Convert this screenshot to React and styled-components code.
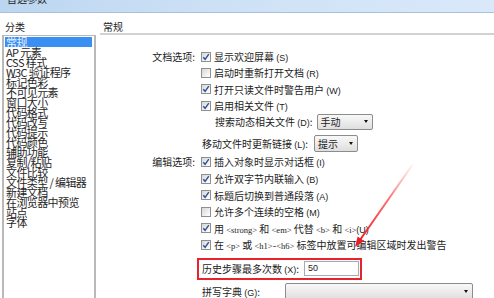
import React from "react";
import styled, { createGlobalStyle } from "styled-components";

const GlobalStyle = createGlobalStyle`
  html, body {
    margin: 0;
    padding: 0;
    background: #fff;
    overflow: hidden;
  }
  * {
    box-sizing: border-box;
  }
`;

const CJK = `"Noto Sans CJK SC", "Noto Sans", sans-serif`;

const categories = [
  "常规",
  "AP 元素",
  "CSS 样式",
  "W3C 验证程序",
  "标记色彩",
  "不可见元素",
  "窗口大小",
  "代码格式",
  "代码改写",
  "代码提示",
  "代码颜色",
  "辅助功能",
  "复制/粘贴",
  "文件比较",
  "文件类型 / 编辑器",
  "新建文档",
  "在浏览器中预览",
  "站点",
  "字体",
];

export default function App() {
  return (
    <Window>
      <GlobalStyle />
      <TitleBar>
        <TitleText>首选参数</TitleText>
      </TitleBar>
      <Body>
        <Sidebar>
          <SectionLabel>分类</SectionLabel>
          <CategoryList>
            {categories.map((c, i) => (
              <CategoryItem key={c} $selected={i === 0}>
                {c}
              </CategoryItem>
            ))}
          </CategoryList>
        </Sidebar>
        <Main>
          <PanelTitle>常规</PanelTitle>
          <Form>
            <Group>
              <GroupLabel>文档选项:</GroupLabel>
              <GroupBody>
                <CheckRow checked label="显示欢迎屏幕" k="S" />
                <CheckRow label="启动时重新打开文档" k="R" />
                <CheckRow checked label="打开只读文件时警告用户" k="W" />
                <CheckRow checked label="启用相关文件" k="T" />
                <FieldRow $indent={13} $h={16}>
                  <span>
                    搜索动态相关文件 <Key>(D)</Key>:
                  </span>
                  <Select $w={56}>
                    <span>手动</span>
                    <Caret />
                  </Select>
                </FieldRow>
              </GroupBody>
            </Group>
            <Group $top={5}>
              <GroupLabel />
              <GroupBody>
                <FieldRow $h={17}>
                  <span>
                    移动文件时更新链接 <Key>(L)</Key>:
                  </span>
                  <Select $w={44} $h={17} $left={2}>
                    <span>提示</span>
                    <Caret />
                  </Select>
                </FieldRow>
              </GroupBody>
            </Group>
            <Group $top={2}>
              <GroupLabel $h={16.6}>编辑选项:</GroupLabel>
              <GroupBody>
                <CheckRow checked h={16.6} label="插入对象时显示对话框" k="I" />
                <CheckRow checked h={16.6} label="允许双字节内联输入" k="B" />
                <CheckRow checked h={16.6} label="标题后切换到普通段落" k="A" />
                <CheckRow h={16.6} label="允许多个连续的空格" k="M" />
                <CheckRow checked h={16.6}>
                  用 <Tag>&lt;strong&gt;</Tag> 和 <Tag>&lt;em&gt;</Tag> 代替{" "}
                  <Tag>&lt;b&gt;</Tag> 和 <Tag>&lt;i&gt;</Tag>
                  <Key>(U)</Key>
                </CheckRow>
                <CheckRow checked h={16.6}>
                  在 <Tag>&lt;p&gt;</Tag> 或 <Tag>&lt;h1&gt;</Tag>-
                  <Tag>&lt;h6&gt;</Tag> 标签中放置可编辑区域时发出警告
                </CheckRow>
              </GroupBody>
            </Group>
            <Group $top={4.7}>
              <GroupLabel />
              <GroupBody>
                <Highlight>
                  <span>
                    历史步骤最多次数 <Key>(X)</Key>:
                  </span>
                  <TextInput>50</TextInput>
                </Highlight>
              </GroupBody>
            </Group>
            <Group $top={3}>
              <GroupLabel />
              <GroupBody>
                <FieldRow $h={17}>
                  <span>
                    拼写字典 <Key>(G)</Key>:
                  </span>
                  <Select $w={188} $h={17} $left={21}>
                    <span />
                    <Caret />
                  </Select>
                </FieldRow>
              </GroupBody>
            </Group>
          </Form>
        </Main>
      </Body>
      <ArrowLayer width="494" height="298" viewBox="0 0 494 298">
        <defs>
          <linearGradient
            id="fade"
            gradientUnits="userSpaceOnUse"
            x1="413"
            y1="164"
            x2="358"
            y2="242"
          >
            <stop offset="0" stopColor="#ff4a4a" stopOpacity="0.05" />
            <stop offset="0.45" stopColor="#ff3030" stopOpacity="0.7" />
            <stop offset="1" stopColor="#ec1c24" />
          </linearGradient>
        </defs>
        <line
          x1="413"
          y1="164"
          x2="360"
          y2="240"
          stroke="url(#fade)"
          strokeWidth="2"
        />
        <polygon points="355,247 357.6,236.4 364,240.9" fill="#ec1c24" />
      </ArrowLayer>
    </Window>
  );
}

function CheckRow({ checked, label, k, h, children }) {
  return (
    <Row $h={h}>
      <Box>
        {checked && (
          <svg width="8" height="8" viewBox="0 0 8 8">
            <path
              d="M1.3 4.2 L3.1 6.3 L6.8 1.2"
              fill="none"
              stroke="#2c4f96"
              strokeWidth="1.4"
            />
          </svg>
        )}
      </Box>
      <RowText>
        {children || (
          <>
            {label} <Key>({k})</Key>
          </>
        )}
      </RowText>
    </Row>
  );
}

const Window = styled.div`
  position: relative;
  width: 494px;
  height: 298px;
  overflow: hidden;
  background: #fff;
  font-family: ${CJK};
  color: #1c1c1c;
`;

const TitleBar = styled.div`
  height: 13px;
  overflow: hidden;
  background: linear-gradient(to right, #bcd6f1, #cde1f6 45%, #d9e9fa);
  border-bottom: 1px solid #a9c0d8;
  padding-left: 7px;
`;

const TitleText = styled.div`
  font-size: 10px;
  line-height: 10px;
  margin-top: -6px;
  color: #222;
`;

const Body = styled.div`
  display: grid;
  grid-template-columns: 100px 1fr;
`;

const Sidebar = styled.div`
  padding-left: 2px;
  display: flex;
  flex-direction: column;
`;

const SectionLabel = styled.div`
  font-size: 10px;
  line-height: 10px;
  padding: 9px 0 0 3px;
  height: 22px;
`;

const CategoryList = styled.div`
  width: 94px;
  height: 280px;
  border: 1px solid #b9b9b9;
  border-left-width: 2px;
  border-right-width: 2px;
  padding: 1px 1px;
`;

const CategoryItem = styled.div`
  font-size: 11px;
  line-height: 10px;
  height: 10px;
  letter-spacing: -0.6px;
  white-space: nowrap;
  padding-left: 1px;
  background: ${(p) => (p.$selected ? "#3a8ff3" : "transparent")};
  color: ${(p) => (p.$selected ? "#eaf3ff" : "#262626")};
  margin-right: ${(p) => (p.$selected ? "1px" : "0")};
`;

const Main = styled.div`
  display: flex;
  flex-direction: column;
`;

const PanelTitle = styled.div`
  font-size: 10px;
  line-height: 10px;
  padding: 9px 0 0 3px;
  height: 22px;
  border-bottom: 2px solid #d2d2d2;
`;

const Form = styled.div`
  padding-top: 13.5px;
  display: flex;
  flex-direction: column;
`;

const Group = styled.div`
  display: grid;
  grid-template-columns: 96px 1fr;
  column-gap: 5px;
  margin-top: ${(p) => p.$top || 0}px;
`;

const GroupLabel = styled.div`
  font-size: 10px;
  text-align: right;
  height: ${(p) => p.$h || 16.3}px;
  line-height: ${(p) => p.$h || 16.3}px;
  padding-right: 1px;
`;

const GroupBody = styled.div`
  display: flex;
  flex-direction: column;
`;

const Row = styled.div`
  display: flex;
  align-items: center;
  height: ${(p) => p.$h || 16.3}px;
  gap: 3px;
`;

const Box = styled.span`
  flex: none;
  width: 10px;
  height: 10px;
  border: 1px solid #8e8f8f;
  background: linear-gradient(135deg, #d6d6d6, #f4f4f4 70%, #fff);
  display: flex;
  align-items: center;
  justify-content: center;
`;

const RowText = styled.span`
  font-size: 10px;
  white-space: nowrap;
`;

const Key = styled.span`
  font-family: "Liberation Sans", Arial, sans-serif;
  font-size: 9px;
`;

const Tag = styled.span`
  font-family: "Liberation Serif", "Times New Roman", serif;
  font-size: 8.5px;
`;

const FieldRow = styled.div`
  display: flex;
  align-items: center;
  height: ${(p) => p.$h}px;
  padding-left: ${(p) => (p.$indent || 0) + 1}px;
  gap: 4px;
  font-size: 10px;
  white-space: nowrap;
`;

const Select = styled.div`
  width: ${(p) => p.$w}px;
  height: ${(p) => p.$h || 16}px;
  margin-left: ${(p) => p.$left || 0}px;
  border: 1px solid #8c8c8c;
  border-radius: 2px;
  background: linear-gradient(#f8f8f8, #ececec 50%, #dedede);
  display: flex;
  align-items: center;
  justify-content: space-between;
  padding: 0 3px 0 3px;
  font-size: 10px;
`;

const Caret = styled.span`
  width: 0;
  height: 0;
  border-left: 2.5px solid transparent;
  border-right: 2.5px solid transparent;
  border-top: 3px solid #111;
  margin-right: 1px;
`;

const Highlight = styled.div`
  display: flex;
  align-items: center;
  width: 165px;
  height: 22px;
  margin-left: -4px;
  border: 2px solid #e8232b;
  padding: 0 1px 0 3px;
  font-size: 10px;
  white-space: nowrap;
`;

const TextInput = styled.div`
  margin-left: auto;
  width: 55px;
  height: 15px;
  border: 1px solid #a5acb5;
  background: #fff;
  font-family: "Liberation Sans", Arial, sans-serif;
  font-size: 9px;
  line-height: 13px;
  padding-left: 3px;
`;

const ArrowLayer = styled.svg`
  position: absolute;
  left: 0;
  top: 0;
  pointer-events: none;
`;
